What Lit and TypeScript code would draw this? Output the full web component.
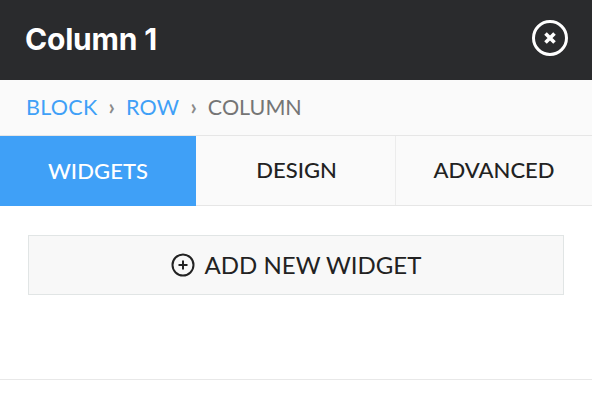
import { LitElement, html, css } from "lit";
import { customElement } from "lit/decorators.js";

@customElement("app-root")
export class AppRoot extends LitElement {
  static styles = css`
    :host {
      display: block;
      width: 592px;
      height: 404px;
      background: #fff;
      font-family: "Lato", "Noto Sans", sans-serif;
      overflow: hidden;
    }
    .head {
      height: 80px;
      box-sizing: border-box;
      background: #2a2b2d;
      color: #fff;
      display: flex;
      align-items: center;
      justify-content: space-between;
      padding: 0 24px 0 25px;
    }
    .title {
      font-family: "Inter", sans-serif;
      font-size: 30px;
      line-height: 36px;
      font-weight: 700;
      letter-spacing: -0.2px;
      margin-top: -3px;
    }
    .close { display: block; width: 36px; height: 36px; margin-top: -4px; }
    .crumbs {
      height: 55px;
      box-sizing: border-box;
      background: #fafafa;
      display: flex;
      align-items: center;
      padding: 0 0 2px 26px;
      font-size: 21.5px;
      color: #757575;
    }
    .crumbs a { color: #3fa0f7; text-decoration: none; letter-spacing: 0.3px; }
    .sep { color: #8a8a8a; font-size: 22px; font-weight: 700; margin: 0 11px; }
    .tabs {
      height: 71px;
      box-sizing: border-box;
      display: flex;
      background: #fafafa;
      border-top: 1px solid #e6e6e6;
      border-bottom: 1px solid #e6e6e6;
    }
    .tab {
      display: flex;
      align-items: center;
      justify-content: center;
      font-size: 22px;
      font-weight: 500;
      color: #222;
      box-sizing: border-box;
      padding-bottom: 2px;
    }
    .t1 { width: 196px; background: #3fa0f7; color: #fff; margin-bottom: -1px; letter-spacing: 0.1px; }
    .t2 { width: 200px; border-right: 1px solid #ececec; padding-left: 2px; }
    .t3 { flex: 1; }
    .body { padding: 29px 28px 0; height: 174px; box-sizing: border-box; border-bottom: 1px solid #e8e8e8; }
    .add {
      height: 60px;
      box-sizing: border-box;
      background: #f8f8f8;
      border: 1px solid #e1e5e5;
      display: flex;
      align-items: center;
      justify-content: center;
      gap: 10px;
      font-size: 24px;
      color: #222;
    }
    .add span { padding-bottom: 2px; }
    .add svg { display: block; width: 24px; height: 24px; }
  `;

  render() {
    return html`
      <div class="head">
        <div class="title">Column 1</div>
        <svg class="close" viewBox="0 0 36 36" fill="none" stroke="#fff">
          <circle cx="18" cy="18" r="16.5" stroke-width="3"></circle>
          <path d="M13.5 13.5l9 9M22.5 13.5l-9 9" stroke-width="3.6"></path>
        </svg>
      </div>
      <div class="crumbs">
        <a>BLOCK</a><span class="sep">›</span><a>ROW</a><span class="sep">›</span><span>COLUMN</span>
      </div>
      <div class="tabs">
        <div class="tab t1">WIDGETS</div>
        <div class="tab t2">DESIGN</div>
        <div class="tab t3">ADVANCED</div>
      </div>
      <div class="body">
        <div class="add">
          <svg viewBox="0 0 24 24" fill="none" stroke="#222" stroke-width="2">
            <circle cx="12" cy="12" r="10.5"></circle>
            <path d="M12 7.5v9M7.5 12h9"></path>
          </svg>
          <span>ADD NEW WIDGET</span>
        </div>
      </div>
    `;
  }
}
